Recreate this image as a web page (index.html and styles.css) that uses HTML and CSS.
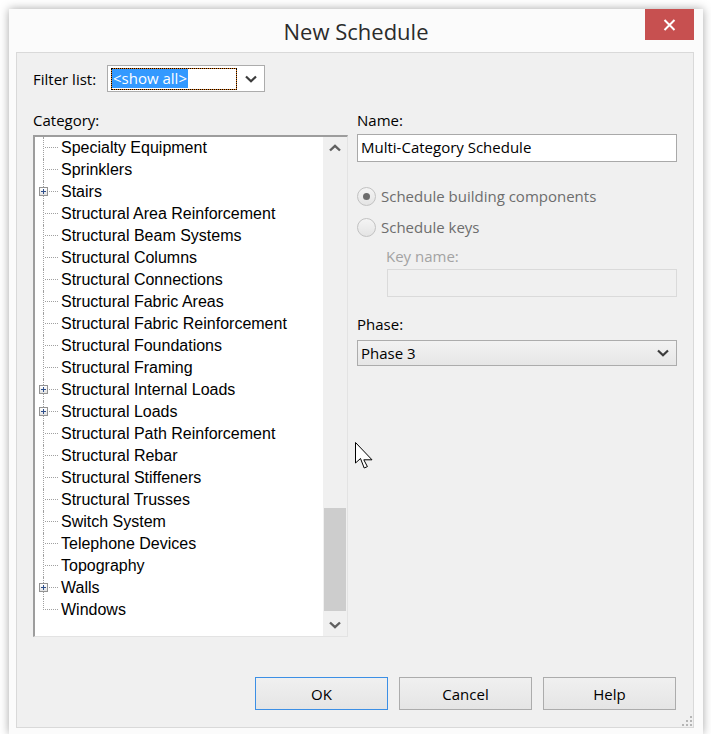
FILE: index.html
```html
<!DOCTYPE html>
<html lang="en">
<head>
    <meta charset="UTF-8">
    <title>New Schedule</title>
    <link rel="stylesheet" href="styles.css">
</head>
<body>
    <div class="window">
        <div class="titlebar">
            <div class="title">New Schedule</div>
            <button class="close" title="Close">
                <svg width="13" height="12" viewBox="0 0 13 12">
                    <path d="M1.5 1 L11.5 11 M11.5 1 L1.5 11" stroke="#fff" stroke-width="2" fill="none"/>
                </svg>
            </button>
        </div>

        <div class="panel">
            <div class="filter-row">
                <span class="label">Filter list:</span>
                <div class="combo filter-combo">
                    <div class="focus"><span class="selected">&lt;show all&gt;</span></div>
                    <div class="combo-btn">
                        <svg width="12" height="8" viewBox="0 0 12 8"><path d="M1 1.5 L6 6.3 L11 1.5" fill="none" stroke="#3c3c3c" stroke-width="2.2"/></svg>
                    </div>
                </div>
            </div>

            <div class="columns">
                <div class="col-left">
                    <div class="label">Category:</div>
                    <div class="tree-box">
                        <ul class="tree">
                            <li class="node">Specialty Equipment</li>
                            <li class="node">Sprinklers</li>
                            <li class="node"><span class="plus"></span>Stairs</li>
                            <li class="node">Structural Area Reinforcement</li>
                            <li class="node">Structural Beam Systems</li>
                            <li class="node">Structural Columns</li>
                            <li class="node">Structural Connections</li>
                            <li class="node">Structural Fabric Areas</li>
                            <li class="node">Structural Fabric Reinforcement</li>
                            <li class="node">Structural Foundations</li>
                            <li class="node">Structural Framing</li>
                            <li class="node"><span class="plus"></span>Structural Internal Loads</li>
                            <li class="node"><span class="plus"></span>Structural Loads</li>
                            <li class="node">Structural Path Reinforcement</li>
                            <li class="node">Structural Rebar</li>
                            <li class="node">Structural Stiffeners</li>
                            <li class="node">Structural Trusses</li>
                            <li class="node">Switch System</li>
                            <li class="node">Telephone Devices</li>
                            <li class="node">Topography</li>
                            <li class="node"><span class="plus"></span>Walls</li>
                            <li class="node last">Windows</li>
                        </ul>
                        <div class="scrollbar">
                            <div class="sb-btn">
                                <svg width="12" height="8" viewBox="0 0 12 8"><path d="M1 6.5 L6 1.8 L11 6.5" fill="none" stroke="#606060" stroke-width="2.4"/></svg>
                            </div>
                            <div class="sb-track"><div class="sb-thumb"></div></div>
                            <div class="sb-btn">
                                <svg width="12" height="8" viewBox="0 0 12 8"><path d="M1 1.5 L6 6.2 L11 1.5" fill="none" stroke="#606060" stroke-width="2.4"/></svg>
                            </div>
                        </div>
                    </div>
                </div>

                <div class="col-right">
                    <div class="label">Name:</div>
                    <div class="textbox">Multi-Category Schedule</div>

                    <div class="radio-row first">
                        <span class="radio checked"></span>
                        <span class="radio-label">Schedule building components</span>
                    </div>
                    <div class="radio-row">
                        <span class="radio"></span>
                        <span class="radio-label">Schedule keys</span>
                    </div>

                    <div class="label disabled key-label">Key name:</div>
                    <div class="textbox disabled key-box"></div>

                    <div class="label phase-label">Phase:</div>
                    <div class="combo phase-combo">
                        <span class="combo-text">Phase 3</span>
                        <svg width="12" height="8" viewBox="0 0 12 8"><path d="M1 1.5 L6 6.3 L11 1.5" fill="none" stroke="#3c3c3c" stroke-width="2.2"/></svg>
                    </div>
                </div>
            </div>

            <div class="buttons">
                <button class="btn default">OK</button>
                <button class="btn">Cancel</button>
                <button class="btn">Help</button>
            </div>

            <svg class="grip" width="12" height="12" viewBox="0 0 12 12">
                <rect x="10" y="2" width="2" height="2" fill="#b5b5b5"/>
                <rect x="6" y="6" width="2" height="2" fill="#b5b5b5"/>
                <rect x="10" y="6" width="2" height="2" fill="#b5b5b5"/>
                <rect x="2" y="10" width="2" height="2" fill="#b5b5b5"/>
                <rect x="6" y="10" width="2" height="2" fill="#b5b5b5"/>
                <rect x="10" y="10" width="2" height="2" fill="#b5b5b5"/>
            </svg>
        </div>
    </div>

    <!-- mouse pointer over the dialog -->
    <svg class="cursor" width="19" height="28" viewBox="0 0 19 28">
        <path d="M0.5 0.5 L0.5 21 L5.5 16.5 L9.2 26 L12.4 24.6 L8.8 17.8 L17 17.8 Z" fill="#fff" stroke="#000" stroke-width="1"/>
    </svg>
</body>
</html>
```

FILE: styles.css
```css
body {
    margin: 0;
    background-color: #ffffff;
    font-family: "Open Sans", "Noto Sans", sans-serif;
    font-size: 15px;
    color: #000;
}
.window {
    width: 694px;
    height: 725px;
    margin: 9px 0 0 9px;
    background-color: #fbfbfb;
    box-shadow: 0 0 9px rgba(0, 0, 0, 0.35);
    display: flex;
    flex-direction: column;
}
.titlebar {
    height: 43px;
    display: grid;
    grid-template-columns: 1fr auto 1fr;
}
.title {
    grid-column: 2;
    font-size: 22px;
    color: #2b2b2b;
    line-height: 45px;
}
.close {
    grid-column: 3;
    justify-self: end;
    align-self: start;
    width: 49px;
    height: 31px;
    margin-right: 9px;
    border: none;
    padding: 0;
    background-color: #c75050;
    display: flex;
    align-items: center;
    justify-content: center;
}
.panel {
    position: relative;
    height: 674px;
    margin: 0 9px 0 7px;
    border: 1px solid #d9d9d9;
    background-color: #f0f0f0;
    padding: 0 16px;
}
.label {
    height: 20px;
    line-height: 20px;
}
.filter-row {
    margin-top: 12px;
    height: 27px;
    display: flex;
    align-items: center;
    gap: 9px;
}
.filter-row .label {
    width: 65px;
}
.combo {
    border: 1px solid #acacac;
    display: flex;
    align-items: center;
}
.filter-combo {
    width: 156px;
    height: 25px;
    background-color: #fff;
}
.focus {
    margin-left: 3px;
    width: 124px;
    height: 20px;
    border: 1px dotted #000;
    background: linear-gradient(#fff, #fff) padding-box, #e07b1f border-box;
    display: flex;
    align-items: center;
}
.selected {
    margin-left: 0;
    background-color: #3399ff;
    color: #fff;
    line-height: 19px;
    padding: 0 1px;
}
.combo-btn {
    flex: 1;
    display: flex;
    justify-content: center;
    align-items: center;
    height: 100%;
}
.columns {
    margin-top: 18px;
    display: flex;
    gap: 9px;
}
.col-left {
    width: 315px;
}
.col-left .label {
    margin-bottom: 5px;
}
.tree-box {
    height: 499px;
    border-style: solid;
    border-width: 2px 1px 1px 2px;
    border-color: #9d9d9d #e3e3e3 #e3e3e3 #9d9d9d;
    background-color: #fff;
    display: flex;
}
.tree {
    flex: 1;
    list-style: none;
    margin: 0;
    padding: 0;
    font-family: "Liberation Sans", Arial, sans-serif;
    font-size: 16px;
}
.node {
    position: relative;
    height: 22px;
    line-height: 21px;
    padding-left: 26px;
}
.node::before {
    content: "";
    position: absolute;
    left: 8px;
    top: 0;
    bottom: 0;
    border-left: 1px dotted #a0a0a0;
}
.node.last::before {
    bottom: 11px;
}
.node::after {
    content: "";
    position: absolute;
    left: 10px;
    width: 13px;
    top: 10px;
    border-top: 1px dotted #a0a0a0;
}
.plus {
    position: absolute;
    left: 4px;
    top: 6px;
    width: 7px;
    height: 7px;
    border: 1px solid #939393;
    background:
        linear-gradient(#2f4f8a, #2f4f8a) center / 5px 1px no-repeat,
        linear-gradient(#2f4f8a, #2f4f8a) center / 1px 5px no-repeat,
        linear-gradient(#fff, #e2e2e2);
    z-index: 1;
}
.scrollbar {
    width: 24px;
    background-color: #f0f0f0;
    display: flex;
    flex-direction: column;
}
.sb-btn {
    height: 22px;
    display: flex;
    align-items: center;
    justify-content: center;
}
.sb-track {
    flex: 1;
}
.sb-thumb {
    margin-top: 349px;
    height: 103px;
    margin-left: 1px;
    width: 22px;
    background-color: #cdcdcd;
}
.col-right {
    width: 320px;
}
.col-right > .label:first-child {
    margin-bottom: 4px;
}
.textbox {
    height: 26px;
    line-height: 25px;
    border: 1px solid #a9a9a9;
    background-color: #fff;
    padding-left: 3px;
}
.textbox.disabled {
    border-color: #dadada;
    background-color: #f0f0f0;
}
.radio-row {
    height: 22px;
    display: flex;
    align-items: center;
    gap: 5px;
    margin-top: 9px;
}
.radio-row.first {
    margin-top: 23px;
}
.radio {
    box-sizing: border-box;
    width: 19px;
    height: 19px;
    border-radius: 50%;
    border: 1px solid #c2c2c2;
    background: linear-gradient(#f4f4f4, #e4e4e4);
    display: flex;
    align-items: center;
    justify-content: center;
}
.radio.checked::after {
    content: "";
    width: 7px;
    height: 7px;
    border-radius: 50%;
    background-color: #6b6b6b;
}
.radio-label {
    color: #6d6d6d;
}
.label.disabled {
    color: #a3a3a3;
}
.key-label {
    margin: 8px 0 0 29px;
}
.key-box {
    margin: 3px 0 0 30px;
}
.phase-label {
    margin-top: 17px;
}
.phase-combo {
    margin-top: 6px;
    height: 24px;
    background: linear-gradient(#f2f2f2, #e6e6e6);
    justify-content: space-between;
    padding: 0 7px 0 3px;
}
.buttons {
    margin-top: 40px;
    display: flex;
    justify-content: flex-end;
    gap: 11px;
    padding-right: 1px;
}
.btn {
    width: 133px;
    height: 33px;
    border: 1px solid #acacac;
    background: linear-gradient(#f0f0f0, #e5e5e5);
    font-family: "Open Sans", "Noto Sans", sans-serif;
    font-size: 15px;
    color: #000;
    padding: 0;
}
.btn.default {
    border-color: #3c8fe5;
}
.grip {
    position: absolute;
    right: 1px;
    bottom: 1px;
}
.cursor {
    position: absolute;
    left: 355px;
    top: 442px;
}
```
